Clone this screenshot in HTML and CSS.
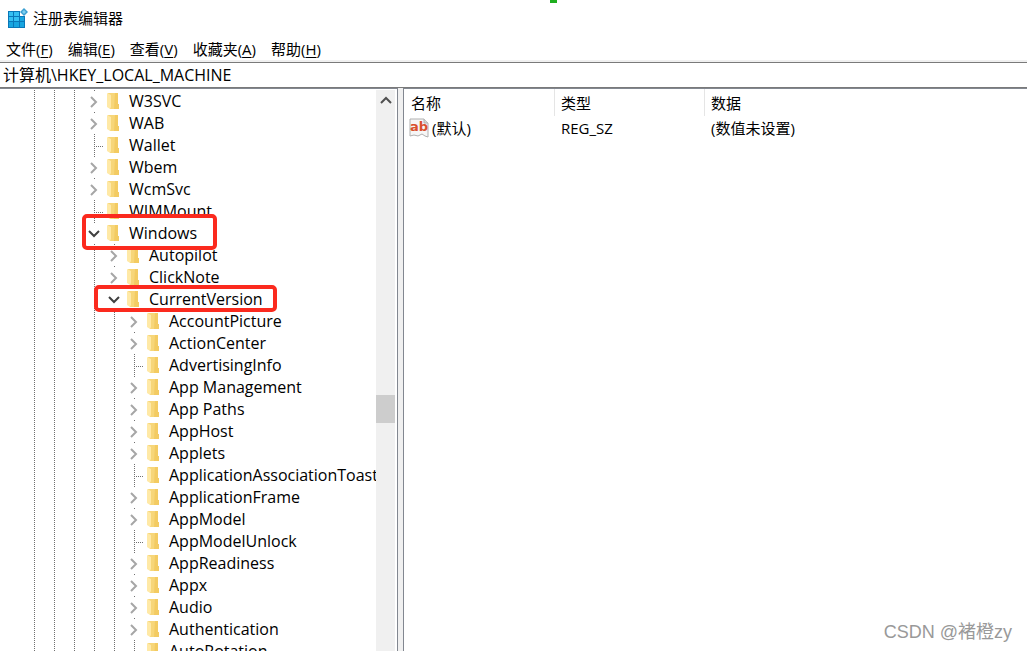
FILE: index.html
```
<!DOCTYPE html>
<html lang="zh-CN">
<head>
  <meta charset="UTF-8" />
  <title>注册表编辑器</title>
  <link rel="stylesheet" href="styles.css">
</head>
<body>
  <svg class="sprites" aria-hidden="true">
    <symbol id="folder" viewBox="0 0 12 16">
      <path d="M1 0h10v11h1v5H3z" fill="#f7d679" />
      <path d="M8 0h3v11h1v5H7z" fill="#f3cb62" />
      <path d="M0 0l4 2v12l-1 2-3-2z" fill="#ffe9a6" />
    </symbol>
    <symbol id="closed" viewBox="0 0 20 22">
      <path d="M7 7l5 5-5 5" fill="none" stroke="#a6a6a6" stroke-width="2" />
    </symbol>
    <symbol id="open" viewBox="0 0 20 22">
      <path d="M5 9l5 5 5-5" fill="none" stroke="#404040" stroke-width="2" />
    </symbol>
  </svg>
  <span class="marker"></span>

  <header class="titlebar">
    <svg class="app-icon" viewBox="0 0 20 20">
      <path d="M0 3h12v5h5v12H0z" fill="#0a77b8" />
      <path d="M1 4h4v4H1zM6 4h5v4H6zM1 9h4v4H1zM6 9h5v4H6z" fill="#35c0f2" />
      <path d="M12 9h4v4h-4zM1 14h4v5H1zM6 14h5v5H6zM12 14h4v5h-4z" fill="#18a5e0" />
      <path d="M16 0l4 4-4 4-4-4z" fill="#3b9fd2" />
      <path d="M16 2l2 2-2 2-2-2z" fill="#7fd0f0" />
    </svg>
    <h1>注册表编辑器</h1>
  </header>

  <nav class="menu">
    <button type="button">文件(<u>F</u>)</button>
    <button type="button">编辑(<u>E</u>)</button>
    <button type="button">查看(<u>V</u>)</button>
    <button type="button">收藏夹(<u>A</u>)</button>
    <button type="button">帮助(<u>H</u>)</button>
  </nav>

  <input class="address" type="text" aria-label="地址" value="计算机\HKEY_LOCAL_MACHINE">

  <main class="panes">
    <section class="tree-pane">
      <div class="tree">
        <ul>
          <li><div class="row"><button type="button" class="toggle" aria-label="展开"><svg><use href="#closed" /></svg></button><svg class="folder"><use href="#folder" /></svg>W3SVC</div></li>
          <li><div class="row"><button type="button" class="toggle" aria-label="展开"><svg><use href="#closed" /></svg></button><svg class="folder"><use href="#folder" /></svg>WAB</div></li>
          <li><div class="row"><span class="leaf"></span><svg class="folder"><use href="#folder" /></svg>Wallet</div></li>
          <li><div class="row"><button type="button" class="toggle" aria-label="展开"><svg><use href="#closed" /></svg></button><svg class="folder"><use href="#folder" /></svg>Wbem</div></li>
          <li><div class="row"><button type="button" class="toggle" aria-label="展开"><svg><use href="#closed" /></svg></button><svg class="folder"><use href="#folder" /></svg>WcmSvc</div></li>
          <li><div class="row"><span class="leaf"></span><svg class="folder"><use href="#folder" /></svg>WIMMount</div></li>
          <li>
            <div class="row"><button type="button" class="toggle" aria-label="折叠"><svg><use href="#open" /></svg></button><svg class="folder"><use href="#folder" /></svg>Windows<span class="mark mark-windows"></span></div>
            <ul>
              <li><div class="row"><button type="button" class="toggle" aria-label="展开"><svg><use href="#closed" /></svg></button><svg class="folder"><use href="#folder" /></svg>Autopilot</div></li>
              <li><div class="row"><button type="button" class="toggle" aria-label="展开"><svg><use href="#closed" /></svg></button><svg class="folder"><use href="#folder" /></svg>ClickNote</div></li>
              <li>
                <div class="row"><button type="button" class="toggle" aria-label="折叠"><svg><use href="#open" /></svg></button><svg class="folder"><use href="#folder" /></svg>CurrentVersion<span class="mark mark-version"></span></div>
                <ul>
                  <li><div class="row"><button type="button" class="toggle" aria-label="展开"><svg><use href="#closed" /></svg></button><svg class="folder"><use href="#folder" /></svg>AccountPicture</div></li>
                  <li><div class="row"><button type="button" class="toggle" aria-label="展开"><svg><use href="#closed" /></svg></button><svg class="folder"><use href="#folder" /></svg>ActionCenter</div></li>
                  <li><div class="row"><span class="leaf"></span><svg class="folder"><use href="#folder" /></svg>AdvertisingInfo</div></li>
                  <li><div class="row"><button type="button" class="toggle" aria-label="展开"><svg><use href="#closed" /></svg></button><svg class="folder"><use href="#folder" /></svg>App Management</div></li>
                  <li><div class="row"><button type="button" class="toggle" aria-label="展开"><svg><use href="#closed" /></svg></button><svg class="folder"><use href="#folder" /></svg>App Paths</div></li>
                  <li><div class="row"><button type="button" class="toggle" aria-label="展开"><svg><use href="#closed" /></svg></button><svg class="folder"><use href="#folder" /></svg>AppHost</div></li>
                  <li><div class="row"><button type="button" class="toggle" aria-label="展开"><svg><use href="#closed" /></svg></button><svg class="folder"><use href="#folder" /></svg>Applets</div></li>
                  <li><div class="row"><span class="leaf"></span><svg class="folder"><use href="#folder" /></svg>ApplicationAssociationToast</div></li>
                  <li><div class="row"><button type="button" class="toggle" aria-label="展开"><svg><use href="#closed" /></svg></button><svg class="folder"><use href="#folder" /></svg>ApplicationFrame</div></li>
                  <li><div class="row"><button type="button" class="toggle" aria-label="展开"><svg><use href="#closed" /></svg></button><svg class="folder"><use href="#folder" /></svg>AppModel</div></li>
                  <li><div class="row"><span class="leaf"></span><svg class="folder"><use href="#folder" /></svg>AppModelUnlock</div></li>
                  <li><div class="row"><button type="button" class="toggle" aria-label="展开"><svg><use href="#closed" /></svg></button><svg class="folder"><use href="#folder" /></svg>AppReadiness</div></li>
                  <li><div class="row"><button type="button" class="toggle" aria-label="展开"><svg><use href="#closed" /></svg></button><svg class="folder"><use href="#folder" /></svg>Appx</div></li>
                  <li><div class="row"><button type="button" class="toggle" aria-label="展开"><svg><use href="#closed" /></svg></button><svg class="folder"><use href="#folder" /></svg>Audio</div></li>
                  <li><div class="row"><button type="button" class="toggle" aria-label="展开"><svg><use href="#closed" /></svg></button><svg class="folder"><use href="#folder" /></svg>Authentication</div></li>
                  <li><div class="row"><span class="leaf"></span><svg class="folder"><use href="#folder" /></svg>AutoRotation</div></li>
                </ul>
              </li>
            </ul>
          </li>
        </ul>
      </div>
      <div class="scrollbar">
        <button type="button" aria-label="向上滚动"><svg viewBox="0 0 19 22"><path d="M5 13l5-5 5 5" fill="none" stroke="#505050" stroke-width="2" /></svg></button>
        <span class="track-above"></span>
        <span class="thumb"></span>
        <span class="track-below"></span>
      </div>
    </section>

    <section class="values-pane">
      <table>
        <thead>
          <tr><th class="name">名称</th><th class="type">类型</th><th>数据</th></tr>
        </thead>
        <tbody>
          <tr>
            <td>
              <div class="value-name">
                <svg class="value-icon" viewBox="0 0 20 20">
                  <path d="M1 1h14l4 4v14l-3-1-3-2-4 2-4-1-4 1z" fill="#f6f6f6" stroke="#b0b0b0" />
                  <path d="M15 1v4h4" fill="#d5d5d5" stroke="#b0b0b0" />
                  <text x="10" y="13" text-anchor="middle" class="ab">ab</text>
                </svg>
                (默认)
              </div>
            </td>
            <td>REG_SZ</td>
            <td>(数值未设置)</td>
          </tr>
        </tbody>
      </table>
    </section>
  </main>

  <div class="watermark">CSDN @褚橙zy</div>
</body>
</html>
```
FILE: styles.css
```
* {
  box-sizing: border-box;
}
body {
  margin: 0;
  height: 100vh;
  display: flex;
  flex-direction: column;
  overflow: hidden;
  position: relative;
  background: #fff;
  color: #000;
  font-family: "Open Sans", "Noto Sans CJK SC", sans-serif;
  font-size: 15px;
  line-height: 22px;
}
button, input {
  font: inherit;
  color: inherit;
  border: none;
  background: none;
  padding: 0;
}
ul {
  list-style: none;
  margin: 0;
  padding: 0;
}
.sprites {
  position: absolute;
  width: 0;
  height: 0;
}
.marker {
  position: absolute;
  top: 0;
  left: 550px;
  width: 7px;
  height: 3px;
  background: #1fae1f;
}

/* title, menu, address */
.titlebar {
  display: flex;
  align-items: center;
  gap: 5px;
  height: 38px;
  padding: 0 0 2px 8px;
}
.titlebar h1 {
  margin: 0;
  font-size: 15px;
  font-weight: normal;
}
.app-icon {
  width: 20px;
  height: 20px;
}
.menu {
  display: flex;
  gap: 15px;
  height: 24px;
  padding-left: 6px;
  border-bottom: 2px solid #f0f0f0;
}
.menu u {
  text-underline-offset: 2px;
}
.address {
  flex: none;
  width: 100%;
  height: 26px;
  padding: 0 3px 2px;
  border-top: 1px solid #7a7a7a;
  border-bottom: 1px solid #7a7a7a;
  outline: none;
  font-size: 16px;
}

/* panes */
.panes {
  flex: 1;
  display: flex;
  gap: 5px;
  min-height: 0;
  background: #f0f0f0;
}
.tree-pane {
  flex: none;
  width: 398px;
  display: flex;
  padding: 1px 2px 0 0;
  border-top: 1px solid #828790;
  border-right: 1px solid #828790;
  background: #fff;
}
.tree {
  flex: 1;
  overflow: hidden;
  padding-left: 84px;
  font-size: 16px;
  --dots: repeating-linear-gradient(#707070 0 1px, transparent 1px 2px);
  background-image: var(--dots), var(--dots), var(--dots);
  background-size: 1px 100%;
  background-position: 34px 0, 54px 0, 74px 0;
  background-repeat: no-repeat;
}
.tree ul ul {
  padding-left: 20px;
  background: var(--dots) 10px 0 / 1px 100% no-repeat;
}
.row {
  display: flex;
  align-items: center;
  height: 22px;
  position: relative;
  white-space: nowrap;
}
.toggle, .leaf {
  flex: none;
  width: 20px;
  height: 22px;
}
.toggle {
  background: linear-gradient(#707070, #707070) 10px 0 / 1px 1px no-repeat;
}
.toggle svg {
  display: block;
  width: 20px;
  height: 22px;
}
.leaf {
  background:
    var(--dots) 10px 0 / 1px 100% no-repeat,
    repeating-linear-gradient(90deg, #707070 0 1px, transparent 1px 2px) 10px 12px / 10px 1px no-repeat;
}
.folder {
  flex: none;
  width: 12px;
  height: 16px;
  margin: 0 10px 0 3px;
}
.mark {
  position: absolute;
  z-index: 1;
  border: 4px solid #fb2a1e;
  border-radius: 5px;
}
.mark-windows {
  top: -8px;
  left: -2px;
  width: 135px;
  height: 36px;
}
.mark-version {
  top: -3px;
  left: -10px;
  width: 183px;
  height: 27px;
}

.scrollbar {
  display: flex;
  flex-direction: column;
  flex: none;
  width: 19px;
  background: #f0f0f0;
}
.scrollbar button, .scrollbar svg {
  display: block;
  width: 19px;
  height: 22px;
}
.track-above {
  flex: 283;
}
.track-below {
  flex: 228;
}
.thumb {
  height: 28px;
  background: #cdcdcd;
}

.values-pane {
  flex: 1;
  min-width: 0;
  border-top: 1px solid #828790;
  border-left: 1px solid #828790;
  background: #fff;
}
table {
  width: 100%;
  table-layout: fixed;
  border-spacing: 0;
}
th, td {
  padding: 0 6px;
  font-weight: normal;
  text-align: left;
  white-space: nowrap;
}
th {
  height: 27px;
}
th.name, th.type {
  width: 150px;
  border-right: 1px solid #e5e5e5;
}
th.name {
  width: 151px;
  padding-left: 7px;
}
td {
  height: 24px;
}
td:first-child {
  padding-left: 5px;
}
.value-name {
  display: flex;
  align-items: center;
  gap: 3px;
}
.value-icon {
  width: 20px;
  height: 20px;
}
.ab {
  font: bold 13px "DejaVu Sans", sans-serif;
  fill: #d9502e;
}

.watermark {
  position: absolute;
  right: 15px;
  bottom: 8px;
  font-family: "Liberation Sans", "Noto Sans CJK SC", sans-serif;
  font-size: 18px;
  color: #999;
}
```
